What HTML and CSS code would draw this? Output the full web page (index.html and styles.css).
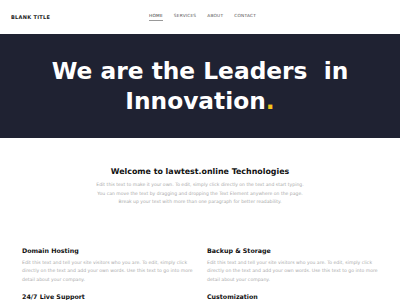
FILE: index.html
```html
<!DOCTYPE html>
<html>
<head>
<meta charset="utf-8">
<link rel="stylesheet" href="styles.css">
</head>
<body>
<header class="topbar">
  <div class="brand">BLANK TITLE</div>
  <nav class="nav">
    <a class="nav-link active">HOME</a>
    <a class="nav-link">SERVICES</a>
    <a class="nav-link">ABOUT</a>
    <a class="nav-link">CONTACT</a>
  </nav>
</header>
<section class="hero">
  <h1 class="hero-title">We are the Leaders &nbsp;in<br>Innovation<span class="dot">.</span></h1>
</section>
<section class="intro">
  <h2 class="intro-title">Welcome to lawtest.online Technologies</h2>
  <p class="intro-text">Edit this text to make it your own. To edit, simply click directly on the text and start typing.<br>You can move the text by dragging and dropping the Text Element anywhere on the page.<br>Break up your text with more than one paragraph for better readability.</p>
</section>
<section class="features">
  <div class="feature">
    <h3 class="feature-title">Domain Hosting</h3>
    <p class="feature-text">Edit this text and tell your site visitors who you are. To edit, simply click directly on the text and add your own words. Use this text to go into more detail about your company.</p>
  </div>
  <div class="feature">
    <h3 class="feature-title">Backup &amp; Storage</h3>
    <p class="feature-text">Edit this text and tell your site visitors who you are. To edit, simply click directly on the text and add your own words. Use this text to go into more detail about your company.</p>
  </div>
  <div class="feature">
    <h3 class="feature-title">24/7 Live Support</h3>
  </div>
  <div class="feature">
    <h3 class="feature-title">Customization</h3>
  </div>
</section>
</body>
</html>
```
FILE: styles.css
```css
* { box-sizing: border-box; }
html, body { margin: 0; padding: 0; }
body {
  width: 400px;
  height: 300px;
  overflow: hidden;
  background: #fff;
  font-family: "DejaVu Sans", sans-serif;
  color: #222;
}
.topbar {
  height: 34px;
  display: flex;
  align-items: center;
  padding: 0 11px;
}
.brand {
  font-size: 5px;
  font-weight: bold;
  letter-spacing: 0.3px;
  color: #222;
  width: 138px;
}
.nav {
  display: flex;
  gap: 11px;
}
.nav-link {
  font-size: 4.3px;
  color: #555;
  letter-spacing: 0.2px;
  padding-bottom: 2px;
  border-bottom: 0.7px solid transparent;
}
.nav-link.active {
  border-bottom-color: #999;
  color: #333;
}
.hero {
  background: #1f2232;
  height: 104px;
  display: flex;
  align-items: center;
  justify-content: center;
}
.hero-title {
  margin: 0;
  text-align: center;
  color: #fff;
  font-size: 23.3px;
  line-height: 30px;
  font-weight: bold;
}
.dot { color: #f5c518; }
.intro {
  text-align: center;
  padding-top: 29px;
}
.intro-title {
  margin: 0 0 5px;
  font-size: 7.9px;
  font-weight: bold;
  color: #111;
}
.intro-text {
  margin: 0;
  font-size: 4.55px;
  line-height: 8.5px;
  color: #aaa;
}
.features {
  display: grid;
  grid-template-columns: 185px 175px;
  padding: 40px 0 0 22px;
  row-gap: 9px;
}
.feature-title {
  margin: 0 0 5px;
  font-size: 6.3px;
  font-weight: bold;
  color: #111;
}
.feature-text {
  margin: 0;
  font-size: 4.6px;
  line-height: 8.5px;
  color: #aaa;
  width: 175px;
}
```
